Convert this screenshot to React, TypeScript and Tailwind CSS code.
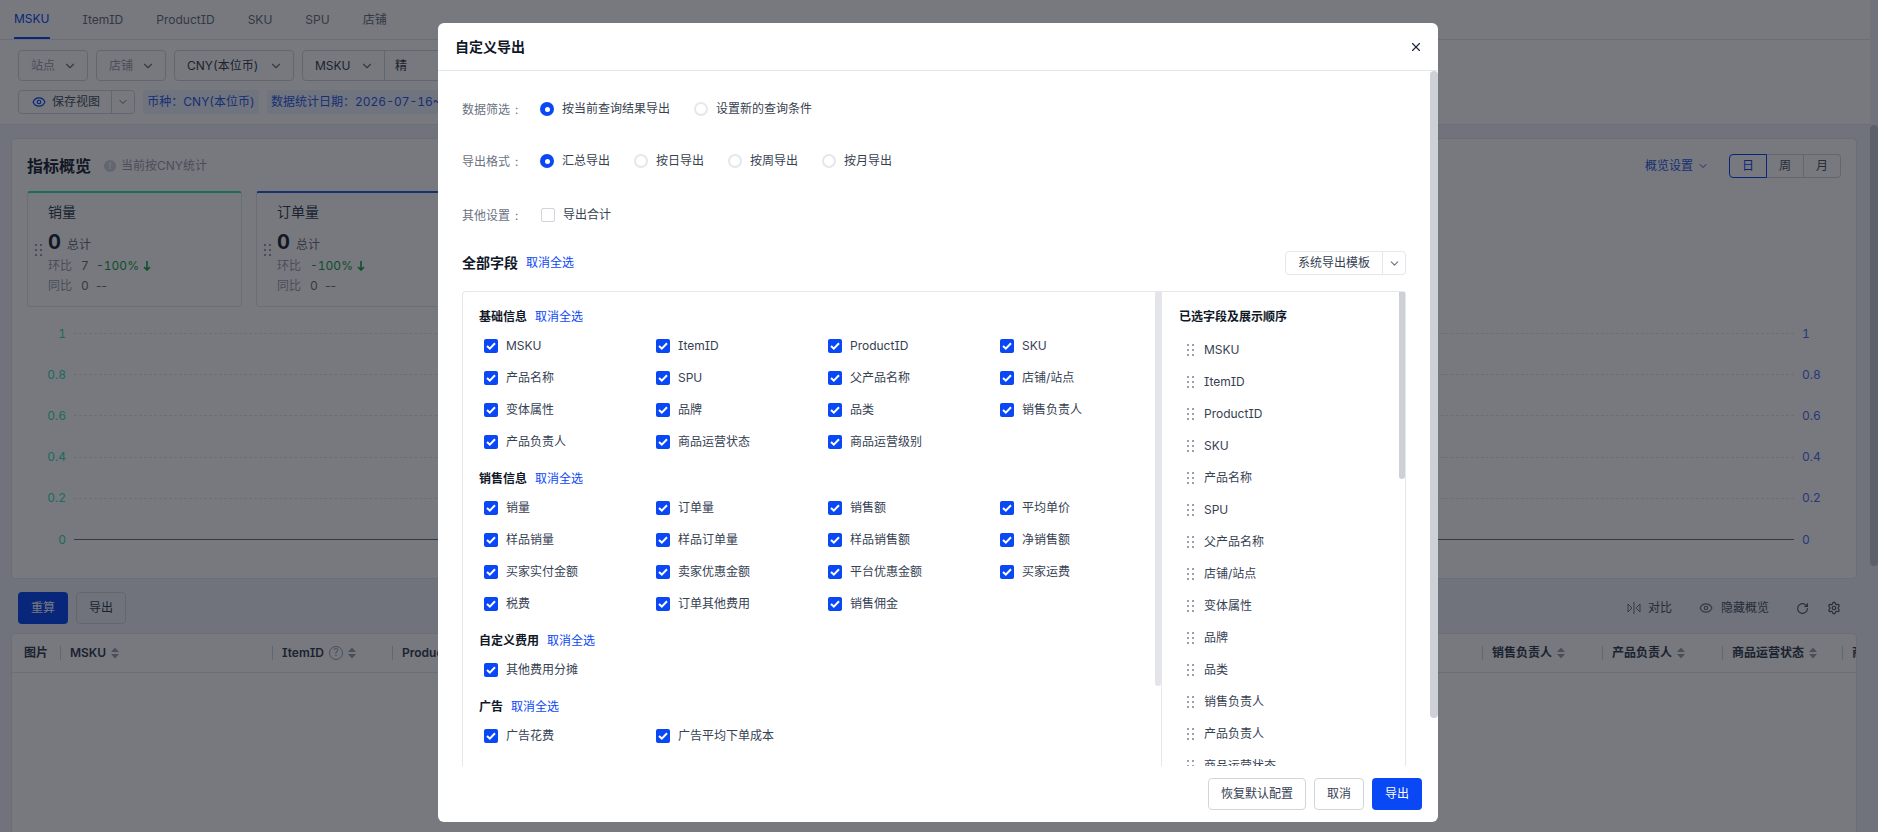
import React from 'react';
import { ChevronDown, Eye, RotateCw, Settings, X } from 'lucide-react';

const FONT = "font-['Inter','Noto_Sans_CJK_SC',sans-serif] [font-feature-settings:'cv08'] tabular-nums";

const sections = [
  {
    title: '基础信息',
    items: ['MSKU', 'ItemID', 'ProductID', 'SKU', '产品名称', 'SPU', '父产品名称', '店铺/站点', '变体属性', '品牌', '品类', '销售负责人', '产品负责人', '商品运营状态', '商品运营级别'],
  },
  {
    title: '销售信息',
    items: ['销量', '订单量', '销售额', '平均单价', '样品销量', '样品订单量', '样品销售额', '净销售额', '买家实付金额', '卖家优惠金额', '平台优惠金额', '买家运费', '税费', '订单其他费用', '销售佣金'],
  },
  { title: '自定义费用', items: ['其他费用分摊'] },
  { title: '广告', items: ['广告花费', '广告平均下单成本'] },
];

const selected = ['MSKU', 'ItemID', 'ProductID', 'SKU', '产品名称', 'SPU', '父产品名称', '店铺/站点', '变体属性', '品牌', '品类', '销售负责人', '产品负责人', '商品运营状态'];

const columns = [
  { name: 'ProductID', w: 'w-[130px]' },
  { name: 'SKU', w: 'w-[120px]' },
  { name: '产品名称', w: 'w-[120px]' },
  { name: 'SPU', w: 'w-[120px]' },
  { name: '父产品名称', w: 'w-[120px]' },
  { name: '店铺/站点', w: 'w-[120px]' },
  { name: '变体属性', w: 'w-[120px]' },
  { name: '品牌', w: 'w-[120px]' },
  { name: '品类', w: 'w-[120px]' },
  { name: '销售负责人', w: 'w-[120px]' },
  { name: '产品负责人', w: 'w-[120px]' },
  { name: '商品运营状态', w: 'w-[120px]' },
  { name: '商品运营级别', w: 'w-[120px]' },
];

function Handle({ className }: { className?: string }) {
  return (
    <svg width="7" height="12" viewBox="0 0 7 12" className={className} fill="currentColor">
      <rect x="0" y="0" width="2" height="2" />
      <rect x="5" y="0" width="2" height="2" />
      <rect x="0" y="5" width="2" height="2" />
      <rect x="5" y="5" width="2" height="2" />
      <rect x="0" y="10" width="2" height="2" />
      <rect x="5" y="10" width="2" height="2" />
    </svg>
  );
}

function SortIcon() {
  return (
    <svg width="8" height="12" viewBox="0 0 8 12" className="shrink-0 text-gray-400" fill="currentColor">
      <path d="M4 0.5 8 5H0z" />
      <path d="M0 7h8l-4 4.5z" />
    </svg>
  );
}

function Check() {
  return (
    <span className="flex h-[14px] w-[14px] shrink-0 items-center justify-center rounded-[2px] bg-[#0a47f5]">
      <svg width="10" height="8" viewBox="0 0 10 8" fill="none" stroke="white" strokeWidth="2">
        <path d="M1 4l2.8 2.6L9 1.2" />
      </svg>
    </span>
  );
}

function Radio({ on, label }: { on?: boolean; label: string }) {
  return (
    <div className="flex items-center gap-2">
      {on ? (
        <span className="flex h-[14px] w-[14px] items-center justify-center rounded-full bg-[#0a47f5]">
          <span className="h-[5px] w-[5px] rounded-full bg-white" />
        </span>
      ) : (
        <span className="h-[14px] w-[14px] rounded-full border-2 border-[#e5e7eb]" />
      )}
      <span className="text-xs text-[#374151]">{label}</span>
    </div>
  );
}

function FieldLabel({ text, w }: { text: string; w: string }) {
  return (
    <span className={`${w} mt-[2px] shrink-0 text-xs text-gray-500`}>
      {text}
      <span className="ml-[5px]">:</span>
    </span>
  );
}

function SelectBox({ label, w, dim }: { label: string; w: string; dim?: boolean }) {
  return (
    <div className={`flex h-[31px] ${w} items-center justify-between rounded border border-gray-300 pl-3 pr-[10px] text-xs ${dim ? 'text-gray-400' : 'text-gray-700'}`}>
      {label}
      <ChevronDown size={14} className="text-gray-500" />
    </div>
  );
}

function Kpi({ title, color, ratio, yoy }: { title: string; color: string; ratio?: string; yoy: string }) {
  return (
    <div className={`flex h-[116px] w-[215px] shrink-0 items-center rounded-[3px] border border-gray-200 border-t-2 ${color}`}>
      <div className="w-[20px] pl-[7px]">
        <Handle className="text-gray-400" />
      </div>
      <div className="flex-1 self-start pt-[9px]">
        <div className="h-5 text-sm leading-5 text-gray-700">{title}</div>
        <div className="mt-[6px] flex h-7 items-baseline gap-[6px]">
          <span className="text-xl font-bold text-gray-800">0</span>
          <span className="text-xs text-gray-500">总计</span>
        </div>
        <div className="flex h-5 items-center gap-[9px] text-xs text-gray-400">
          <span>环比</span>
          {ratio && <span className="w-[6px] text-gray-500">{ratio}</span>}
          <span className="text-[#16a34a]">-100%</span>
          <svg width="8" height="10" viewBox="0 0 8 10" fill="none" stroke="#16a34a" strokeWidth="1.6" className="-ml-[5px]">
            <path d="M4 0v9M1 6l3 3 3-3" />
          </svg>
        </div>
        <div className="flex h-5 items-center gap-[9px] text-xs text-gray-400">
          <span>同比</span>
          <span className="w-[6px] text-gray-500">0</span>
          <span className="normal-nums text-gray-500">{yoy}</span>
        </div>
      </div>
    </div>
  );
}

function ChartRow({ left, right, solid }: { left: string; right: string; solid?: boolean }) {
  return (
    <div className="flex h-[41.2px] items-center">
      <span className="w-[54px] text-right text-xs text-[#34e0b8]">{left}</span>
      <div className={`ml-2 flex-1 border-t ${solid ? 'border-gray-500' : 'border-dashed border-gray-200'}`} />
      <span className="w-[62px] pl-2 text-xs text-[#4f6ff0]">{right}</span>
    </div>
  );
}

function Th({ name, w, help, bold = true }: { name: string; w: string; help?: boolean; bold?: boolean }) {
  return (
    <div className={`flex h-[14px] ${w} shrink-0 items-center gap-[5px] border-l border-gray-300 pl-[9px] text-xs ${bold ? 'font-semibold' : ''} text-gray-700`}>
      <span className="whitespace-nowrap">{name}</span>
      {help && (
        <span className="flex h-[14px] w-[14px] items-center justify-center rounded-full border border-gray-400 text-[10px] font-normal text-gray-400">?</span>
      )}
      <SortIcon />
    </div>
  );
}

function Page() {
  return (
    <div className="flex h-[832px] w-[1878px] overflow-hidden bg-[#eff2fb]">
      <div className="w-[1870px] shrink-0">
        <div className="h-[125px] border-b border-gray-200 bg-white">
          <div className="flex h-[40px] gap-[33px] border-b border-gray-200 pl-[14px] text-xs text-gray-500">
            <div className="flex h-[39px] items-center border-b-2 border-[#0a47f5] text-[#0a47f5]">MSKU</div>
            <div className="flex h-[39px] items-center">ItemID</div>
            <div className="flex h-[39px] items-center">ProductID</div>
            <div className="flex h-[39px] items-center">SKU</div>
            <div className="flex h-[39px] items-center">SPU</div>
            <div className="flex h-[39px] items-center">店铺</div>
          </div>
          <div className="flex gap-2 pl-[18px] pt-[10px]">
            <SelectBox label="站点" w="w-[70px]" dim />
            <SelectBox label="店铺" w="w-[70px]" dim />
            <SelectBox label="CNY(本位币)" w="w-[120px]" />
            <div className="flex h-[31px] w-[300px] rounded border border-gray-300 text-xs text-gray-700">
              <div className="flex w-[82px] items-center justify-between border-r border-gray-300 pl-3 pr-[10px]">
                MSKU
                <ChevronDown size={14} className="text-gray-500" />
              </div>
              <div className="flex items-center pl-[10px]">精</div>
            </div>
          </div>
          <div className="mt-[9px] flex items-center gap-2 pl-[18px] text-xs">
            <div className="flex h-[24px] w-[117px] rounded border border-gray-300 text-gray-600">
              <div className="flex w-[93px] items-center gap-[6px] border-r border-gray-300 pl-[13px]">
                <Eye size={14} className="text-[#0a47f5]" />
                保存视图
              </div>
              <div className="flex flex-1 items-center justify-center">
                <ChevronDown size={12} className="text-gray-500" />
              </div>
            </div>
            <div className="flex h-[24px] w-[116px] items-center justify-center rounded-[2px] bg-[#eef3ff] text-[#2f5be7]">币种：CNY(本位币)</div>
            <div className="flex h-[24px] items-center whitespace-nowrap rounded-[2px] bg-[#eef3ff] px-[4px] text-[#2f5be7]">数据统计日期：2026-07-16~2026-07-16</div>
          </div>
        </div>

        <div className="pl-[11px] pr-[13px] pt-[13px]">
          <div className="h-[441px] rounded border border-gray-200 bg-white">
            <div className="flex h-[52px] items-center pl-[15px] pr-[15px] pt-[2px]">
              <span className="text-base font-semibold text-gray-800">指标概览</span>
              <span className="ml-[13px] flex h-3 w-3 items-center justify-center rounded-full bg-gray-300 text-[9px] font-bold text-white">!</span>
              <span className="ml-[5px] text-xs text-gray-400">当前按CNY统计</span>
              <div className="ml-auto flex items-center text-xs text-[#2f5be7]">
                概览设置
                <ChevronDown size={12} className="ml-[4px]" />
              </div>
              <div className="ml-5 flex h-6 w-[112px] text-xs text-gray-600">
                <div className="flex w-[38px] items-center justify-center rounded-l border border-[#0a47f5] text-[#0a47f5]">日</div>
                <div className="flex w-[37px] items-center justify-center border-y border-r border-gray-300">周</div>
                <div className="flex w-[37px] items-center justify-center rounded-r border-y border-r border-gray-300">月</div>
              </div>
            </div>
            <div className="flex gap-[14px] px-[15px]">
              <Kpi title="销量" color="border-t-[#34e0b8]" ratio="7" yoy="--" />
              <Kpi title="订单量" color="border-t-[#2f5be7]" yoy="--" />
            </div>
            <div className="mt-[6px]">
              <ChartRow left="1" right="1" />
              <ChartRow left="0.8" right="0.8" />
              <ChartRow left="0.6" right="0.6" />
              <ChartRow left="0.4" right="0.4" />
              <ChartRow left="0.2" right="0.2" />
              <ChartRow left="0" right="0" solid />
            </div>
          </div>

          <div className="mt-[13px] flex h-8 items-center justify-between pl-[7px] pr-[16px] text-xs">
            <div className="flex gap-2">
              <div className="flex h-8 w-[50px] items-center justify-center rounded bg-[#0a47f5] text-white">重算</div>
              <div className="flex h-8 w-[50px] items-center justify-center rounded border border-gray-300 text-gray-700">导出</div>
            </div>
            <div className="flex items-center text-gray-600">
              <svg width="14" height="12" viewBox="0 0 14 12" fill="none" stroke="currentColor" strokeWidth="1" className="text-gray-500">
                <path d="M1 2v8l4-4zM13 2v8L9 6zM7 0v12" />
              </svg>
              <span className="ml-[7px]">对比</span>
              <Eye size={14} className="ml-[27px] text-gray-500" />
              <span className="ml-2">隐藏概览</span>
              <RotateCw size={13} className="ml-[27px] text-gray-600" />
              <Settings size={14} className="ml-[18px] text-gray-600" />
            </div>
          </div>

          <div className="mt-[9px] h-[300px] overflow-hidden rounded-t border border-gray-200 bg-white">
            <div className="flex h-[39px] items-center border-b border-gray-200">
              <div className="w-[48px] shrink-0 pl-[12px] text-xs font-semibold text-gray-700">图片</div>
              <Th name="MSKU" w="w-[212px]" />
              <Th name="ItemID" w="w-[120px]" help />
              {columns.map((c) => (
                <Th key={c.name} name={c.name} w={c.w} />
              ))}
            </div>
          </div>
        </div>
      </div>
      <div className="w-2 shrink-0 pt-[125px]">
        <div className="h-[441px] rounded-full bg-[#c4c7ce]" />
      </div>
    </div>
  );
}

function ExportModal() {
  return (
    <div className="flex h-[799px] w-[1000px] flex-col overflow-hidden rounded-md bg-white">
      <div className="flex h-[48px] shrink-0 items-center justify-between border-b border-gray-200 pl-[17px] pr-[15px]">
        <span className="text-sm font-semibold text-gray-900">自定义导出</span>
        <X size={14} className="text-gray-800" />
      </div>
      <div className="flex min-h-0 flex-1">
        <div className="w-[992px] shrink-0 overflow-hidden pl-6 pr-6 pt-[31px]">
          <div className="flex h-[14px] items-center">
            <FieldLabel text="数据筛选" w="w-[78px]" />
            <div className="flex gap-[24px]">
              <Radio on label="按当前查询结果导出" />
              <Radio label="设置新的查询条件" />
            </div>
          </div>
          <div className="mt-[38px] flex h-[14px] items-center">
            <FieldLabel text="导出格式" w="w-[78px]" />
            <div className="flex gap-[24px]">
              <Radio on label="汇总导出" />
              <Radio label="按日导出" />
              <Radio label="按周导出" />
              <Radio label="按月导出" />
            </div>
          </div>
          <div className="mt-[40px] flex h-[14px] items-center">
            <FieldLabel text="其他设置" w="w-[79px]" />
            <span className="h-[14px] w-[14px] rounded-[2px] border border-gray-300" />
            <span className="ml-2 text-xs text-gray-700">导出合计</span>
          </div>
          <div className="mt-[29px] flex h-6 items-center">
            <span className="text-sm font-semibold text-gray-900">全部字段</span>
            <span className="ml-2 text-xs text-[#0a47f5]">取消全选</span>
            <div className="ml-auto flex h-6 w-[121px] rounded border border-gray-200 text-xs text-gray-700">
              <div className="flex w-[97px] items-center justify-center border-r border-gray-200">系统导出模板</div>
              <div className="flex flex-1 items-center justify-center">
                <ChevronDown size={13} className="text-gray-500" />
              </div>
            </div>
          </div>

          <div className="mt-[16px] flex h-[600px] rounded-t border-x border-t border-gray-200">
            <div className="flex w-[698px] shrink-0">
              <div className="w-[692px] shrink-0 pl-[16px] pt-[15px]">
                {sections.map((s) => (
                  <div key={s.title} className="mb-[11px]">
                    <div className="flex h-5 items-center gap-2 text-xs">
                      <span className="font-semibold text-gray-900">{s.title}</span>
                      <span className="text-[#0a47f5]">取消全选</span>
                    </div>
                    <div className="mt-[3px] grid grid-cols-[172px_172px_172px_172px] pl-[5px]">
                      {s.items.map((name) => (
                        <div key={name} className="flex h-8 items-center gap-2">
                          <Check />
                          <span className="text-xs text-gray-700">{name}</span>
                        </div>
                      ))}
                    </div>
                  </div>
                ))}
              </div>
              <div className="h-[394px] w-[6px] shrink-0 rounded-b-full rounded-t-sm bg-[#e3e5ea]" />
            </div>
            <div className="flex flex-1 border-l border-gray-200">
              <div className="flex-1 pl-[17px] pt-[15px]">
                <div className="flex h-5 items-center text-xs font-semibold text-gray-900">已选字段及展示顺序</div>
                <div className="mt-[3px]">
                  {selected.map((name) => (
                    <div key={name} className="flex h-8 items-center pl-2 pt-[8px]">
                      <Handle className="text-gray-400" />
                      <span className="ml-[10px] text-xs text-gray-700">{name}</span>
                    </div>
                  ))}
                </div>
              </div>
              <div className="h-[187px] w-[6px] shrink-0 rounded-b-full rounded-t-sm bg-[#cdd0d7]" />
            </div>
          </div>
        </div>
        <div className="w-2 shrink-0">
          <div className="h-[647px] rounded-full bg-[#cdd0d7]" />
        </div>
      </div>
      <div className="flex h-[56px] shrink-0 items-center justify-end gap-2 pr-4 text-xs">
        <div className="flex h-8 w-[98px] items-center justify-center rounded border border-gray-300 text-gray-700">恢复默认配置</div>
        <div className="flex h-8 w-[50px] items-center justify-center rounded border border-gray-300 text-gray-700">取消</div>
        <div className="flex h-8 w-[50px] items-center justify-center rounded bg-[#0a47f5] text-white">导出</div>
      </div>
    </div>
  );
}

export default function App() {
  return (
    <div className={`relative h-[832px] w-[1878px] overflow-hidden ${FONT}`}>
      <Page />
      <div className="absolute inset-0 flex items-start bg-[#080b14]/55 pl-[438px] pt-[23px]">
        <ExportModal />
      </div>
    </div>
  );
}
